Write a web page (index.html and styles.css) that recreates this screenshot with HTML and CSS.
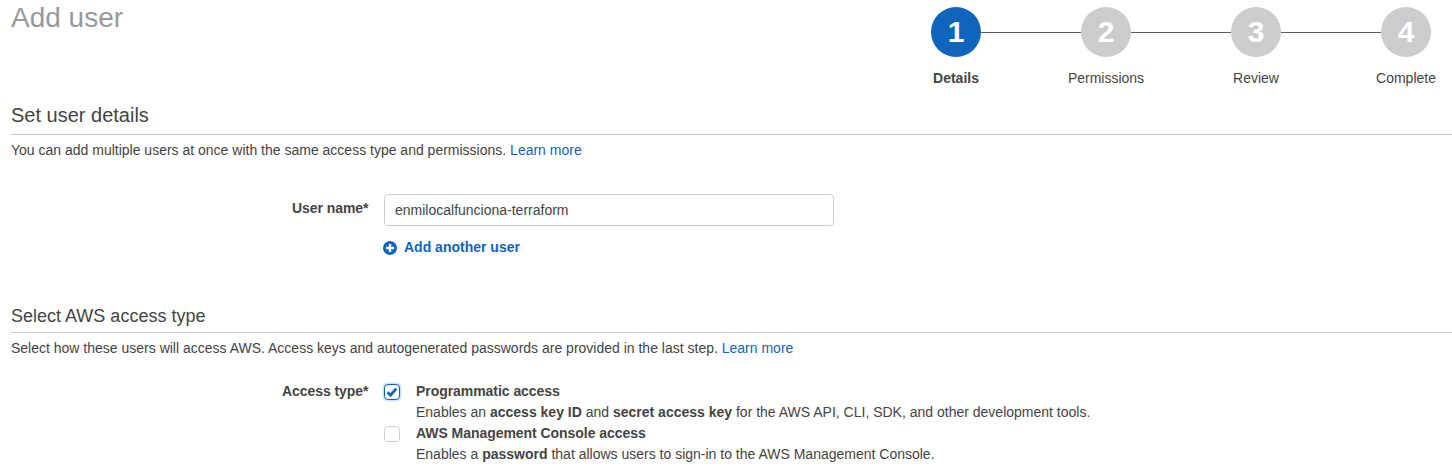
FILE: index.html
```html
<!DOCTYPE html>
<html lang="en">
<head>
<meta charset="utf-8">
<title>Add user</title>
<link rel="stylesheet" href="styles.css">
</head>
<body>
<header class="top">
  <h1 class="title">Add user</h1>
  <ol class="steps">
    <li class="step step-active"><span class="dot">1</span><span class="step-label">Details</span></li>
    <li class="step"><span class="dot">2</span><span class="step-label">Permissions</span></li>
    <li class="step"><span class="dot">3</span><span class="step-label">Review</span></li>
    <li class="step step-last"><span class="dot">4</span><span class="step-label">Complete</span></li>
  </ol>
</header>

<section class="section-one">
  <h2 class="heading">Set user details</h2>
  <p class="intro">You can add multiple users at once with the same access type and permissions. <a class="link" href="#">Learn more</a></p>
  <div class="form-row row-name">
    <label class="form-label label-name">User name*</label>
    <div class="form-field">
      <input class="text-input" type="text" value="enmilocalfunciona-terraform">
      <a class="add-link" href="#">
        <svg class="add-icon" viewBox="0 0 14 14" aria-hidden="true"><circle cx="7" cy="7" r="7" fill="#0f65bb"/><path d="M7 3v8M3 7h8" stroke="#fff" stroke-width="2.4"/></svg>
        Add another user
      </a>
    </div>
  </div>
</section>

<section class="section-two">
  <h2 class="heading heading-small">Select AWS access type</h2>
  <p class="intro">Select how these users will access AWS. Access keys and autogenerated passwords are provided in the last step. <a class="link" href="#">Learn more</a></p>
  <div class="form-row row-access">
    <span class="form-label label-access">Access type*</span>
    <div class="options">
      <div class="option">
        <span class="check check-on"><svg viewBox="0 0 14 14" class="tick" aria-hidden="true"><path d="M2.6 7.2l3 3 5.6-6.6" fill="none" stroke="#0f65bb" stroke-width="2.8"/></svg></span>
        <div class="option-text">
          <div class="option-title">Programmatic access</div>
          <div class="option-desc">Enables an <b>access key ID</b> and <b>secret access key</b> for the AWS API, CLI, SDK, and other development tools.</div>
        </div>
      </div>
      <div class="option">
        <span class="check"></span>
        <div class="option-text">
          <div class="option-title">AWS Management Console access</div>
          <div class="option-desc">Enables a <b>password</b> that allows users to sign-in to the AWS Management Console.</div>
        </div>
      </div>
    </div>
  </div>
</section>
</body>
</html>
```

FILE: styles.css
```css
* { box-sizing: border-box; }
html, body { margin: 0; padding: 0; }
body {
  background: #fff;
  color: #444;
  font-family: "Liberation Sans", Arial, sans-serif;
  font-size: 14px;
  line-height: 21px;
  padding-left: 11px;
  overflow: hidden;
}
.top { display: flex; justify-content: space-between; height: 102px; }
.title {
  margin: 0;
  font-size: 28px;
  font-weight: 400;
  line-height: 36px;
  color: #999;
}
.steps {
  list-style: none;
  display: flex;
  margin: 7px -29px 0 0;
  padding: 0;
}
.step {
  position: relative;
  width: 150px;
  display: flex;
  flex-direction: column;
  align-items: center;
  text-align: center;
}
.step::after {
  content: "";
  position: absolute;
  top: 25px;
  left: 100px;
  width: 100px;
  height: 1px;
  background: #545b64;
}
.step-last::after { display: none; }
.dot {
  width: 50px;
  height: 50px;
  border-radius: 50%;
  background: #ccc;
  color: #fff;
  font-size: 30px;
  font-weight: 700;
  line-height: 50px;
}
.step-active .dot { background: #0f65bb; }
.step-label { margin-top: 10px; line-height: 22px; white-space: nowrap; }
.step-active .step-label { font-weight: 700; }
.heading {
  margin: 0;
  padding-bottom: 6px;
  font-size: 20px;
  font-weight: 400;
  line-height: 26px;
  color: #444;
  border-bottom: 1px solid #ccc;
}
.heading-small { font-size: 18px; line-height: 24px; padding-top: 1px; padding-bottom: 4px; }
.intro { margin: 5px 0 0; }
.link { color: #0f65bb; text-decoration: none; }
.form-row { display: flex; }
.form-label {
  width: 357.5px;
  text-align: right;
  font-weight: 700;
  letter-spacing: -0.05px;
  flex: none;
}
.form-field { margin-left: 15.5px; }
.row-name { margin-top: 33px; }
.label-name { padding-top: 4px; }
.text-input {
  display: block;
  width: 450px;
  height: 32px;
  padding: 0 10px;
  border: 1px solid #ccc;
  border-radius: 4px;
  font: 14px/20px "Liberation Sans", Arial, sans-serif;
  color: #444;
  background: #fff;
}
.add-link {
  display: flex;
  align-items: center;
  gap: 7px;
  margin: 11px 0 0 -1px;
  color: #0f65bb;
  font-weight: 700;
  text-decoration: none;
}
.add-icon { width: 14px; height: 14px; display: block; }
.section-two { margin-top: 45px; }
.row-access { margin-top: 22px; }
.options { margin-left: 15.5px; }
.option { display: flex; }
.check {
  flex: none;
  width: 16px;
  height: 16px;
  margin-top: 3px;
  border: 1px solid #ccc;
  border-radius: 4px;
  background: #fff;
  display: block;
}
.check-on {
  border-color: #0f65bb;
  box-shadow: 0 0 3px rgba(15, 101, 187, 0.6);
}
.tick { display: block; width: 14px; height: 14px; }
.option-text { margin-left: 16px; }
.option-title { font-weight: 700; letter-spacing: -0.05px; }
.option-desc { white-space: nowrap; }
```
